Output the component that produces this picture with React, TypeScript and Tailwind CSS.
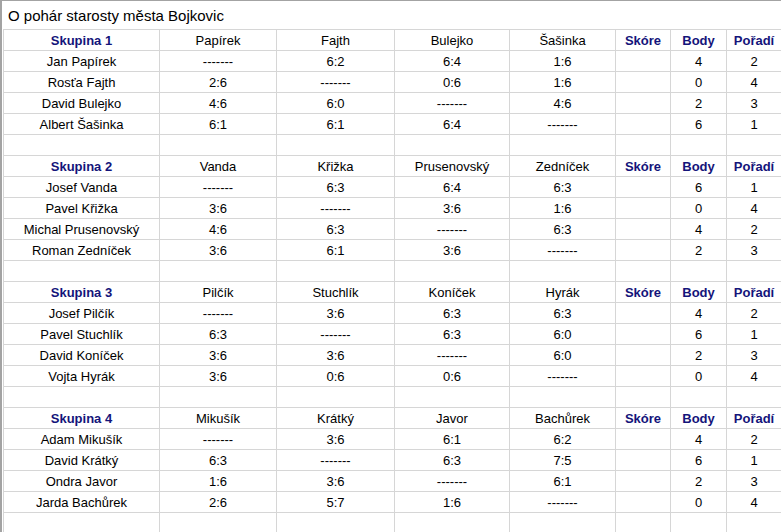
import React from "react";

type Group = {
  title: string;
  cols: string[];
  rows: { name: string; res: string[]; body: string; poradi: string }[];
};

const D = "-------";

const groups: Group[] = [
  {
    title: "Skupina 1",
    cols: ["Papírek", "Fajth", "Bulejko", "Šašinka"],
    rows: [
      { name: "Jan Papírek", res: [D, "6:2", "6:4", "1:6"], body: "4", poradi: "2" },
      { name: "Rosťa Fajth", res: ["2:6", D, "0:6", "1:6"], body: "0", poradi: "4" },
      { name: "David Bulejko", res: ["4:6", "6:0", D, "4:6"], body: "2", poradi: "3" },
      { name: "Albert Šašinka", res: ["6:1", "6:1", "6:4", D], body: "6", poradi: "1" },
    ],
  },
  {
    title: "Skupina 2",
    cols: ["Vanda", "Křižka", "Prusenovský", "Zedníček"],
    rows: [
      { name: "Josef Vanda", res: [D, "6:3", "6:4", "6:3"], body: "6", poradi: "1" },
      { name: "Pavel Křižka", res: ["3:6", D, "3:6", "1:6"], body: "0", poradi: "4" },
      { name: "Michal Prusenovský", res: ["4:6", "6:3", D, "6:3"], body: "4", poradi: "2" },
      { name: "Roman Zedníček", res: ["3:6", "6:1", "3:6", D], body: "2", poradi: "3" },
    ],
  },
  {
    title: "Skupina 3",
    cols: ["Pilčík", "Stuchlík", "Koníček", "Hyrák"],
    rows: [
      { name: "Josef Pilčík", res: [D, "3:6", "6:3", "6:3"], body: "4", poradi: "2" },
      { name: "Pavel Stuchlík", res: ["6:3", D, "6:3", "6:0"], body: "6", poradi: "1" },
      { name: "David Koníček", res: ["3:6", "3:6", D, "6:0"], body: "2", poradi: "3" },
      { name: "Vojta Hyrák", res: ["3:6", "0:6", "0:6", D], body: "0", poradi: "4" },
    ],
  },
  {
    title: "Skupina 4",
    cols: ["Mikušík", "Krátký", "Javor", "Bachůrek"],
    rows: [
      { name: "Adam Mikušík", res: [D, "3:6", "6:1", "6:2"], body: "4", poradi: "2" },
      { name: "David Krátký", res: ["6:3", D, "6:3", "7:5"], body: "6", poradi: "1" },
      { name: "Ondra Javor", res: ["1:6", "3:6", D, "6:1"], body: "2", poradi: "3" },
      { name: "Jarda Bachůrek", res: ["2:6", "5:7", "1:6", D], body: "0", poradi: "4" },
    ],
  },
];

const cell = "bg-white flex items-center justify-center whitespace-nowrap overflow-hidden pt-px";
const head = cell + " font-bold text-[#14147a]";

export default function App() {
  const cells: React.ReactNode[] = [];
  groups.forEach((g, gi) => {
    cells.push(
      <div key={`h${gi}`} className={head}>{g.title}</div>,
      ...g.cols.map((c, i) => (
        <div key={`hc${gi}-${i}`} className={cell}>{c}</div>
      )),
      <div key={`hs${gi}`} className={head}>Skóre</div>,
      <div key={`hb${gi}`} className={head}>Body</div>,
      <div key={`hp${gi}`} className={head}>Pořadí</div>
    );
    g.rows.forEach((r, ri) => {
      cells.push(
        <div key={`n${gi}-${ri}`} className={cell}>{r.name}</div>,
        ...r.res.map((v, i) => (
          <div key={`r${gi}-${ri}-${i}`} className={cell}>{v}</div>
        )),
        <div key={`s${gi}-${ri}`} className={cell}></div>,
        <div key={`b${gi}-${ri}`} className={cell}>{r.body}</div>,
        <div key={`p${gi}-${ri}`} className={cell}>{r.poradi}</div>
      );
    });
    for (let i = 0; i < 8; i++) {
      cells.push(<div key={`e${gi}-${i}`} className={cell}></div>);
    }
  });

  return (
    <div
      className="w-[781px] h-[532px] overflow-hidden bg-white border-t border-l-2 border-[#a3a3a3] text-black text-[13px]"
      style={{ fontFamily: '"Liberation Sans", Arial, sans-serif' }}
    >
      <div className="h-[28px] flex items-center pl-[6px] text-[15px] pt-[2px]">
        O pohár starosty města Bojkovic
      </div>
      <div className="ml-px bg-[#d6d6d6] pt-px pl-px gap-px grid grid-cols-[155px_116px_117px_114px_105px_54px_55px_1fr] auto-rows-[20px]">
        {cells}
      </div>
    </div>
  );
}
